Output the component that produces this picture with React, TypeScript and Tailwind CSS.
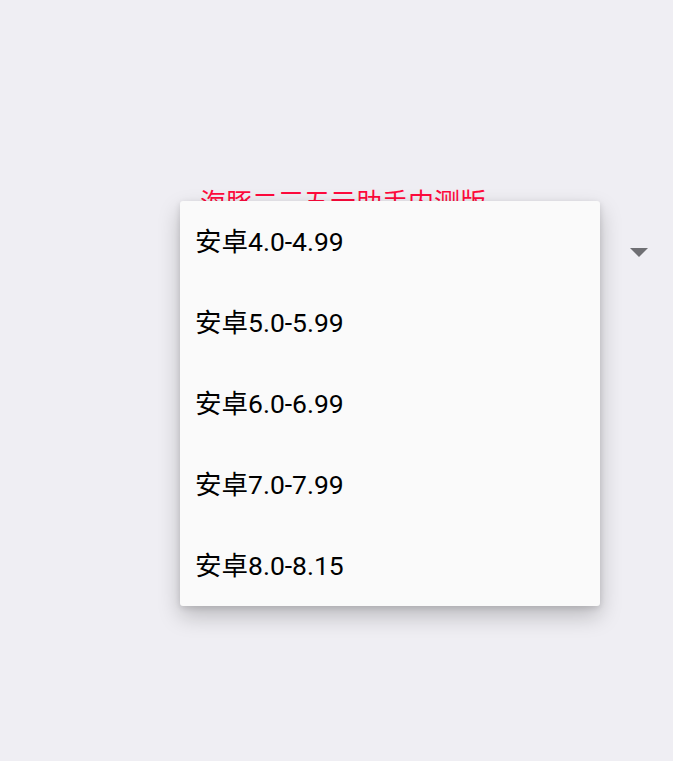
const versions = ['安卓4.0-4.99', '安卓5.0-5.99', '安卓6.0-6.99', '安卓7.0-7.99', '安卓8.0-8.15']

const App = () => {
    return (
        <div
            className="relative h-[761px] w-full overflow-hidden bg-[#efeef3]"
            style={{ fontFamily: 'Roboto, "Noto Sans CJK SC", sans-serif' }}
        >
            {/* Underlying screen */}
            <div className="pt-[186px] pl-[200px] pr-[25px]">
                <p className="text-[26px] leading-[34px] text-[#ff0a3c]">海豚二三五元助手内测版</p>
                <div className="mt-[14px] flex h-[34px] items-center justify-end">
                    <svg width="18" height="10" viewBox="0 0 18 10" className="mt-[4px]">
                        <path d="M0 0 L18 0 L9 9 Z" fill="#6f6f73" />
                    </svg>
                </div>
            </div>

            {/* Popup menu */}
            <div className="absolute left-[180px] top-[201px] w-[420px] rounded-[3px] bg-[#fafafa] shadow-[0_10px_22px_rgba(0,0,0,0.22),0_2px_6px_rgba(0,0,0,0.12)]">
                {versions.map((v) => (
                    <div key={v} className="flex h-[81px] items-center px-[15px] text-[26.5px] text-black">
                        {v}
                    </div>
                ))}
            </div>
        </div>
    )
}

export default App
